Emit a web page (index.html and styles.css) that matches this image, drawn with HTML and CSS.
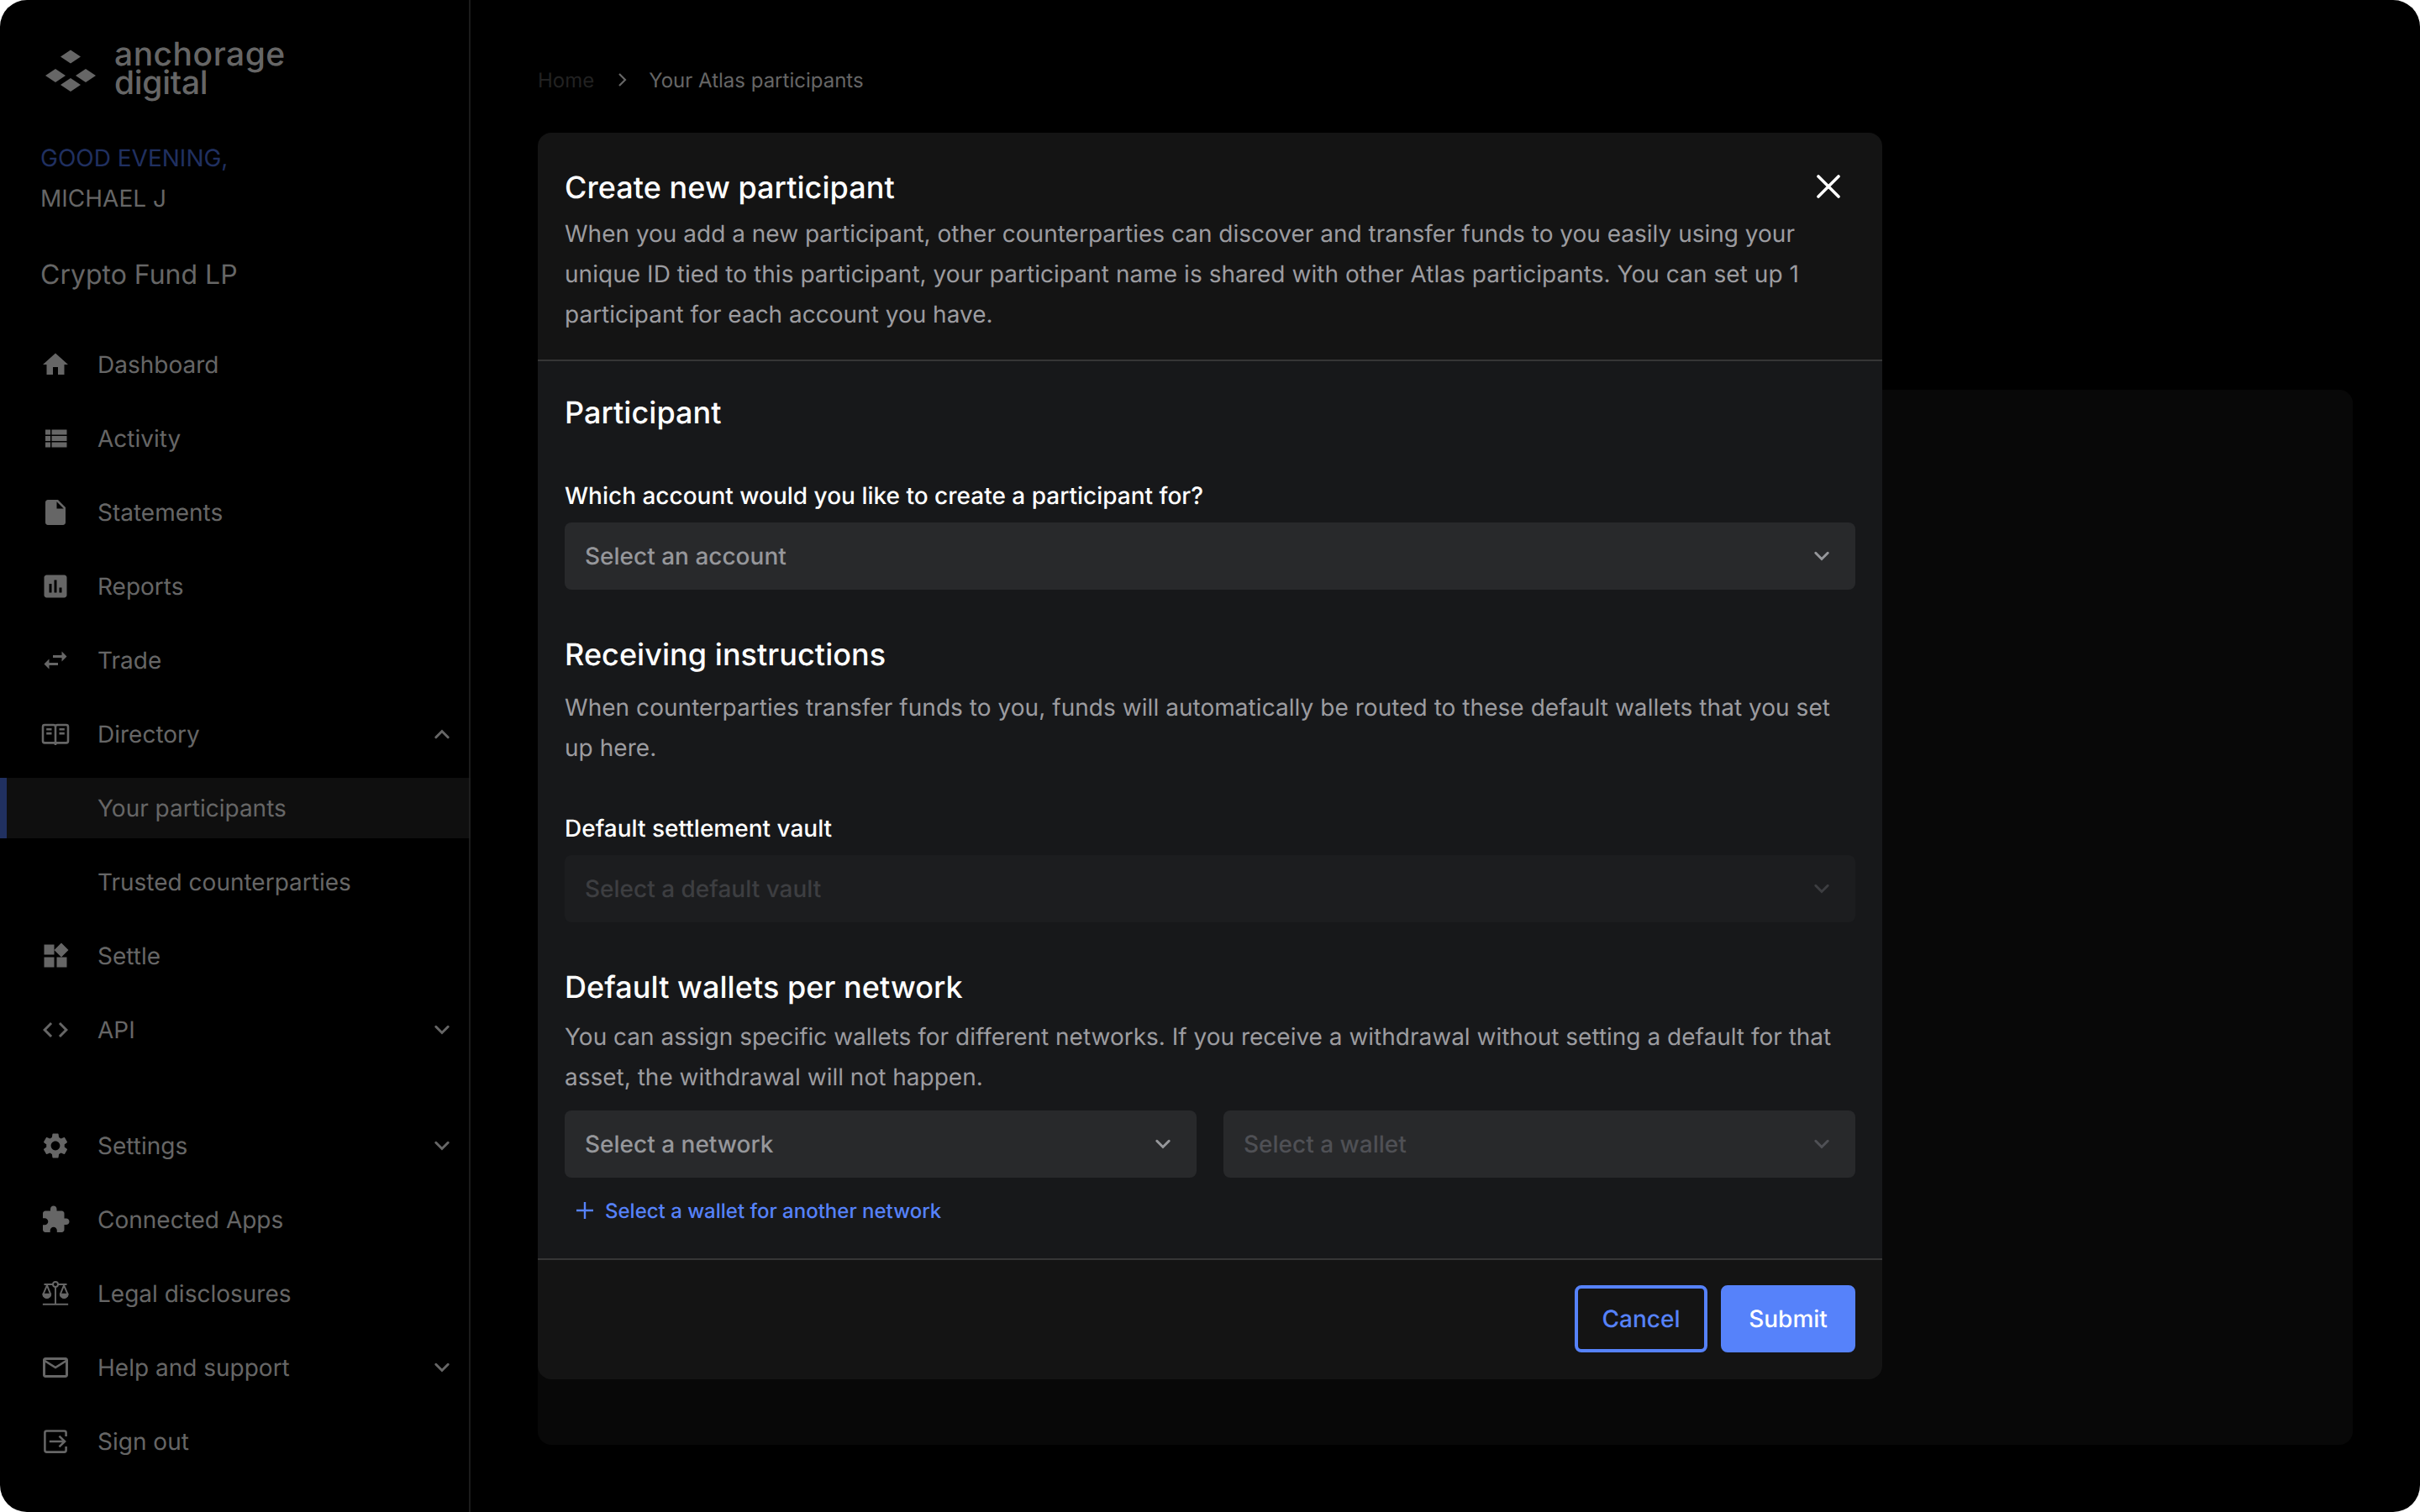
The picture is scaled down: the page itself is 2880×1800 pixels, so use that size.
FILE: index.html
```html
<!DOCTYPE html>
<html lang="en">
<head>
<meta charset="utf-8">
<title>Your Atlas participants</title>
<link rel="stylesheet" href="styles.css">
</head>
<body>
<svg width="0" height="0" class="defs" aria-hidden="true">
  <symbol id="down" viewBox="0 0 24 24"><path d="M7.200 9.500l4.800 4.800 4.800-4.800" fill="none" stroke="currentColor" stroke-width="2" stroke-linecap="round"/></symbol>
  <symbol id="up" viewBox="0 0 24 24"><path d="M7.200 14.500l4.800-4.800 4.800 4.800" fill="none" stroke="currentColor" stroke-width="2" stroke-linecap="round"/></symbol>
</svg>
<div class="app">
  <aside class="sidebar">
    <div class="logo">
      <svg class="logo-mark" viewBox="0 0 60 52"><path d="M30 1.500l12 8-12 8-12-8zM12 24l12 8-12 8-12-8zM48 24l12 8-12 8-12-8zM30 35l12 8-12 8-12-8z" fill="currentColor"/></svg>
      <div class="logo-text"><span class="wide">anchorage</span><span class="tight">digital</span></div>
    </div>
    <div class="greeting"><span class="hello">GOOD EVENING,</span><span>MICHAEL J</span></div>
    <div class="org">Crypto Fund LP</div>
    <nav class="nav">
      <a class="item"><svg class="icon" viewBox="0 0 24 24"><path d="M10 20v-6h4v6h5v-8h3L12 3 2 12h3v8z"/></svg><span>Dashboard</span></a>
      <a class="item"><svg class="icon" viewBox="0 0 24 24"><path d="M4 14h4v-4H4v4zm0 5h4v-4H4v4zM4 9h4V5H4v4zm5 5h12v-4H9v4zm0 5h12v-4H9v4zM9 5v4h12V5H9z"/></svg><span>Activity</span></a>
      <a class="item"><svg class="icon" viewBox="0 0 24 24"><path d="M6 2c-1.100 0-1.990.9-1.990 2L4 20c0 1.100.89 2 1.990 2H18c1.100 0 2-.9 2-2V8l-6-6H6zm7 7V3.500L18.500 9H13z"/></svg><span>Statements</span></a>
      <a class="item"><svg class="icon" viewBox="0 0 24 24"><path d="M19 3H5c-1.100 0-2 .9-2 2v14c0 1.100.9 2 2 2h14c1.100 0 2-.9 2-2V5c0-1.100-.9-2-2-2zM9 17H7v-7h2v7zm4 0h-2V7h2v10zm4 0h-2v-4h2v4z"/></svg><span>Reports</span></a>
      <a class="item"><svg class="icon" viewBox="0 0 24 24"><path d="M6.990 11L3 15l3.990 4v-3H14v-2H6.990v-3zM21 9l-3.990-4v3H10v2h7.010v3L21 9z"/></svg><span>Trade</span></a>
      <a class="item"><svg class="icon line" viewBox="0 0 24 24"><path d="M12 20.600V6.200c0-.9-.7-1.500-1.600-1.500H3.400c-.8 0-1.400.6-1.400 1.400v11.400c0 .8.6 1.400 1.400 1.400h7.400c.7 0 1.200.5 1.200 1.200 0-.7.500-1.200 1.200-1.200h7.400c.8 0 1.400-.6 1.400-1.400V6.100c0-.8-.6-1.400-1.400-1.400h-7c-.9 0-1.600.6-1.600 1.500M4.800 8.200h4.200M4.800 11.400h4.200M15 8.200h4.200M15 11.400h4.200"/></svg><span>Directory</span><svg class="caret"><use href="#up"/></svg></a>
      <a class="item sub active"><span>Your participants</span></a>
      <a class="item sub"><span>Trusted counterparties</span></a>
      <a class="item"><svg class="icon" viewBox="0 0 24 24"><path d="M13 13v8h8v-8h-8zM3 21h8v-8H3v8zM3 3v8h8V3H3zm13.660-1.310L11 7.340 16.660 13l5.660-5.660-5.660-5.650z"/></svg><span>Settle</span></a>
      <a class="item"><svg class="icon" viewBox="0 0 24 24"><path d="M9.400 16.600L4.800 12l4.600-4.600L8 6l-6 6 6 6 1.400-1.400zm5.200 0l4.600-4.600-4.600-4.600L16 6l6 6-6 6-1.400-1.400z"/></svg><span>API</span><svg class="caret"><use href="#down"/></svg></a>
    </nav>
    <nav class="nav secondary">
      <a class="item"><svg class="icon" viewBox="0 0 24 24"><path d="M19.140 12.940c.04-.3.06-.61.06-.94 0-.32-.02-.64-.07-.94l2.030-1.580c.18-.14.23-.41.12-.61l-1.920-3.320c-.12-.22-.37-.29-.59-.22l-2.390.96c-.5-.38-1.030-.7-1.620-.94l-.36-2.540c-.04-.24-.24-.41-.48-.41h-3.840c-.24 0-.43.17-.47.41l-.36 2.540c-.59.24-1.130.57-1.620.94l-2.390-.96c-.22-.08-.47 0-.59.22L2.740 8.870c-.12.21-.08.47.12.61l2.030 1.580c-.05.3-.09.63-.09.94s.02.64.07.94l-2.030 1.580c-.18.14-.23.41-.12.61l1.920 3.320c.12.22.37.29.59.22l2.390-.96c.5.38 1.030.7 1.620.94l.36 2.540c.05.24.24.41.48.41h3.840c.24 0 .44-.17.47-.41l.36-2.540c.59-.24 1.130-.56 1.620-.94l2.390.96c.22.08.47 0 .59-.22l1.920-3.320c.12-.22.07-.47-.12-.61l-2.010-1.580zM12 15.600c-1.980 0-3.600-1.620-3.600-3.600s1.620-3.600 3.600-3.600 3.600 1.620 3.600 3.600-1.620 3.600-3.600 3.600z"/></svg><span>Settings</span><svg class="caret"><use href="#down"/></svg></a>
      <a class="item"><svg class="icon" viewBox="0 0 24 24"><path d="M20.500 11H19V7c0-1.100-.9-2-2-2h-4V3.500C13 2.120 11.880 1 10.500 1S8 2.120 8 3.500V5H4c-1.100 0-1.990.9-1.990 2v3.800H3.500c1.490 0 2.700 1.210 2.700 2.700s-1.210 2.700-2.700 2.700H2V20c0 1.100.9 2 2 2h3.800v-1.500c0-1.490 1.210-2.700 2.700-2.700 1.490 0 2.700 1.210 2.700 2.700V22H17c1.100 0 2-.9 2-2v-4h1.500c1.380 0 2.500-1.120 2.500-2.500S21.880 11 20.500 11z"/></svg><span>Connected Apps</span></a>
      <a class="item"><svg class="icon line thin" viewBox="0 0 24 24"><circle cx="12" cy="4.600" r="2"/><path d="M3 4.600h7M14 4.600h7M12 6.600v13.800M1.900 20.500h20.200M5.300 5.400L2.300 12.400a2.900 2.900 0 0 0 5.800 0L5.300 5.400M18.700 5.400l-2.800 7a2.900 2.900 0 0 0 5.800 0L18.700 5.400"/><path class="solid" d="M2.300 12.400h5.800a2.900 2.900 0 0 1-5.800 0zM15.900 12.400h5.800a2.900 2.900 0 0 1-5.800 0z"/></svg><span>Legal disclosures</span></a>
      <a class="item"><svg class="icon" viewBox="0 0 24 24"><path d="M20 4H4c-1.100 0-1.990.9-1.990 2L2 18c0 1.100.9 2 2 2h16c1.100 0 2-.9 2-2V6c0-1.100-.9-2-2-2zm0 14H4V8l8 5 8-5v10zm-8-7L4 6h16l-8 5z"/></svg><span>Help and support</span><svg class="caret"><use href="#down"/></svg></a>
      <a class="item"><svg class="icon line" viewBox="0 0 24 24"><path d="M20.400 8V5c0-.8-.6-1.400-1.400-1.400H5c-.8 0-1.400.6-1.400 1.400v14c0 .8.600 1.400 1.400 1.400h14c.8 0 1.400-.6 1.400-1.400v-3M7.200 12h12.200M15 7.700l4.400 4.300-4.400 4.300"/></svg><span>Sign out</span></a>
    </nav>
  </aside>
  <main class="main">
    <div class="crumbs"><span class="home">Home</span><svg class="crumb-arrow" viewBox="0 0 12 18"><path d="M2 2l7 7-7 7" fill="none" stroke="currentColor" stroke-width="2.200"/></svg><span>Your Atlas participants</span></div>
    <div class="panel"></div>
  </main>
  <section class="modal">
    <header class="modal-head">
      <div class="title-row"><h1>Create new participant</h1>
        <svg class="close" viewBox="0 0 28 28"><path d="M2 2l24 24M26 2L2 26" stroke="currentColor" stroke-width="3.600" stroke-linecap="round"/></svg></div>
      <p>When you add a new participant, other counterparties can discover and transfer funds to you easily using your<br><span class="loose">unique ID tied to this participant, your participant name is shared with other Atlas participants. You can set up 1</span><br>participant for each account you have.</p>
    </header>
    <div class="modal-body">
      <h2>Participant</h2>
      <label class="first">Which account would you like to create a participant for?</label>
      <div class="select"><span>Select an account</span><svg class="arrow"><use href="#down"/></svg></div>
      <h2 class="receiving">Receiving instructions</h2>
      <p class="receiving-text loose">When counterparties transfer funds to you, funds will automatically be routed to these default wallets that you set<br>up here.</p>
      <label class="vault">Default settlement vault</label>
      <div class="select disabled"><span>Select a default vault</span><svg class="arrow"><use href="#down"/></svg></div>
      <h2 class="wallets">Default wallets per network</h2>
      <p class="wallets-text">You can assign specific wallets for different networks. If you receive a withdrawal without setting a default for that<br>asset, the withdrawal will not happen.</p>
      <div class="pair">
        <div class="select"><span>Select a network</span><svg class="arrow"><use href="#down"/></svg></div>
        <div class="select muted"><span>Select a wallet</span><svg class="arrow"><use href="#down"/></svg></div>
      </div>
      <a class="add"><svg viewBox="0 0 20 20"><path d="M10 0v20M0 10h20" stroke="currentColor" stroke-width="2.400"/></svg><span>Select a wallet for another network</span></a>
    </div>
    <footer class="modal-foot"><button class="btn cancel">Cancel</button><button class="btn submit">Submit</button></footer>
  </section>
</div>
</body>
</html>
```
FILE: styles.css
```css
* { box-sizing: border-box; margin: 0; }
body { background: #fff; font-family: Inter, "Liberation Sans", sans-serif; font-size: 28px; text-rendering: geometricPrecision; }
svg { display: block; }
.defs { position: absolute; }
.app { position: relative; display: flex; width: 2880px; height: 1800px; background: #000; border-radius: 32px; overflow: hidden; color: #666; }

.sidebar { width: 560px; border-right: 2px solid #1b1b1b; }
.logo { display: flex; padding: 44px 0 0 54px; height: 164px; }
.logo-mark { width: 60px; height: 52px; margin-top: 14px; }
.logo-text { display: flex; flex-direction: column; margin: 4px 0 0 22px; font-size: 39px; line-height: 34px; font-weight: 500; }
.wide { letter-spacing: 0.5px; }
.tight { letter-spacing: -0.3px; }
.loose { letter-spacing: 0.045px; }
.greeting { display: flex; flex-direction: column; padding-left: 48px; line-height: 48px; }
.hello { color: #203060; }
.org { margin: 43px 0 47px; padding-left: 48px; font-size: 32px; line-height: 48px; }
.nav { display: flex; flex-direction: column; gap: 16px; }
.secondary { margin-top: 66px; }
.item { display: flex; align-items: center; height: 72px; padding: 0 14px 0 48px; }
.item.sub { padding-left: 116px; }
.item.active { background: #0f0f0f; padding-left: 108px; border-left: 8px solid #203060; margin-right: -2px; border-right: 2px solid #1e1e1e; }
.icon { width: 36px; height: 36px; margin-right: 32px; fill: #666; }
.icon.line { fill: none; stroke: #666; stroke-width: 1.7; }
.icon.thin { stroke-width: 1.3; }
.solid { fill: #666; }
.caret { width: 36px; height: 36px; margin-left: auto; }

.main { flex: 1; display: flex; flex-direction: column; padding: 79px 80px 80px; }
.crumbs { display: flex; align-items: center; height: 32px; font-size: 24px; }
.home { color: #222; }
.crumb-arrow { width: 12px; height: 18px; margin: 0 25px 0 28px; }
.panel { margin-top: 353px; flex: 1; background: #080808; border-radius: 16px; }

.modal { position: absolute; left: 640px; top: 158px; width: 1600px; height: 1484px; display: flex; flex-direction: column; background: #141414; border-radius: 16px; overflow: hidden; color: #9c9ca0; }
.modal-head { height: 272px; padding: 41px 32px 0; border-bottom: 2px solid #363636; }
.title-row { display: flex; justify-content: space-between; align-items: center; height: 48px; margin-bottom: 7px; }
h1, h2 { font-size: 36px; line-height: 48px; font-weight: 500; color: #fff; letter-spacing: 0.05px; }
.close { width: 28px; height: 28px; margin: -2px 18px 0 0; color: #fff; }
p { line-height: 48px; white-space: nowrap; }
.modal-body { height: 1068px; padding: 37px 32px 0; background: #17181a; }
label { display: block; line-height: 40px; font-weight: 500; color: #fff; margin-bottom: 12px; }
.first { margin-top: 55px; }
.receiving { margin-top: 53px; }
.receiving-text { margin-top: 15px; }
.vault { margin-top: 52px; }
.wallets { margin-top: 53px; }
.wallets-text { margin-top: 11px; }
.select { display: flex; align-items: center; justify-content: space-between; height: 80px; padding: 0 22px 0 24px; background: #28292b; border-radius: 8px; font-weight: 500; color: #96979b; }
.arrow { width: 36px; height: 36px; }
.disabled { background: #1c1d1f; color: #3d3e41; }
.muted { color: #4f5055; }
.pair { display: grid; grid-template-columns: 1fr 1fr; gap: 32px; margin-top: 16px; }
.add { display: flex; align-items: center; gap: 14px; margin: 19px 0 0 14px; height: 40px; font-size: 24px; font-weight: 500; color: #5682fa; }
.add svg { width: 20px; height: 20px; }
.modal-foot { flex: 1; display: flex; justify-content: flex-end; gap: 16px; padding: 30px 32px 0; border-top: 2px solid #363636; }
.btn { height: 80px; padding: 0; border: 4px solid #5682fa; border-radius: 8px; font: 500 28px Inter, sans-serif; text-rendering: inherit; }
.cancel { width: 158px; background: none; color: #5682fa; }
.submit { width: 160px; background: #5682fa; color: #fff; }
```
